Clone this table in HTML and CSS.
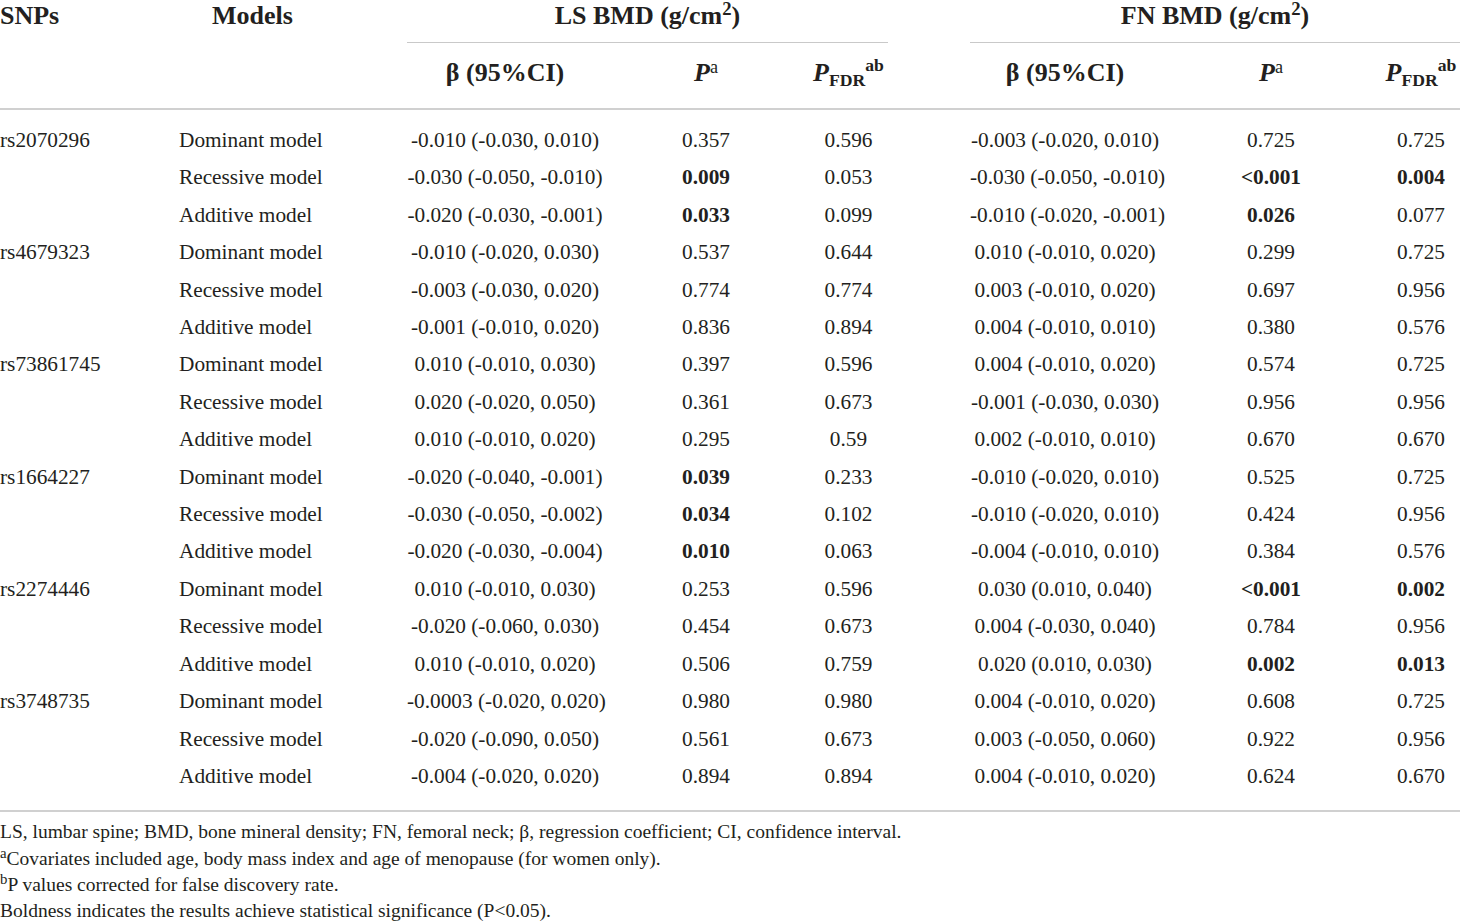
FILE: index.html
```html
<!DOCTYPE html>
<html lang="en">
<head>
  <meta charset="UTF-8">
  <title>SNPs and BMD</title>
  <link rel="stylesheet" href="styles.css">
</head>
<body>
  <table class="bmd">
    <colgroup>
      <col class="c-snp">
      <col class="c-model">
      <col class="c-beta">
      <col class="c-p">
      <col class="c-fdr">
      <col class="c-gap">
      <col class="c-beta2">
      <col class="c-p2">
      <col class="c-fdr2">
    </colgroup>
    <thead>
      <tr class="group-row">
        <th rowspan="2" class="snp-head">SNPs</th>
        <th rowspan="2" class="model-head">Models</th>
        <th colspan="3" class="group">LS BMD (g/cm<sup>2</sup>)</th>
        <th class="gap"></th>
        <th colspan="3" class="group">FN BMD (g/cm<sup>2</sup>)</th>
      </tr>
      <tr class="sub-row">
        <th>β (95%CI)</th>
        <th><i>P</i><sup class="sa">a</sup></th>
        <th><i>P</i><sub>FDR</sub><sup>ab</sup></th>
        <th class="gap"></th>
        <th>β (95%CI)</th>
        <th><i>P</i><sup class="sa">a</sup></th>
        <th><i>P</i><sub>FDR</sub><sup>ab</sup></th>
      </tr>
    </thead>
    <tbody>
      <tr class="first"><td>rs2070296</td><td>Dominant model</td><td>-0.010 (-0.030, 0.010)</td><td>0.357</td><td>0.596</td><td></td><td>-0.003 (-0.020, 0.010)</td><td>0.725</td><td>0.725</td></tr>
      <tr><td></td><td>Recessive model</td><td>-0.030 (-0.050, -0.010)</td><td><b>0.009</b></td><td>0.053</td><td></td><td>-0.030 (-0.050, -0.010)</td><td><b>&lt;0.001</b></td><td><b>0.004</b></td></tr>
      <tr><td></td><td>Additive model</td><td>-0.020 (-0.030, -0.001)</td><td><b>0.033</b></td><td>0.099</td><td></td><td>-0.010 (-0.020, -0.001)</td><td><b>0.026</b></td><td>0.077</td></tr>
      <tr><td>rs4679323</td><td>Dominant model</td><td>-0.010 (-0.020, 0.030)</td><td>0.537</td><td>0.644</td><td></td><td>0.010 (-0.010, 0.020)</td><td>0.299</td><td>0.725</td></tr>
      <tr><td></td><td>Recessive model</td><td>-0.003 (-0.030, 0.020)</td><td>0.774</td><td>0.774</td><td></td><td>0.003 (-0.010, 0.020)</td><td>0.697</td><td>0.956</td></tr>
      <tr><td></td><td>Additive model</td><td>-0.001 (-0.010, 0.020)</td><td>0.836</td><td>0.894</td><td></td><td>0.004 (-0.010, 0.010)</td><td>0.380</td><td>0.576</td></tr>
      <tr><td>rs73861745</td><td>Dominant model</td><td>0.010 (-0.010, 0.030)</td><td>0.397</td><td>0.596</td><td></td><td>0.004 (-0.010, 0.020)</td><td>0.574</td><td>0.725</td></tr>
      <tr><td></td><td>Recessive model</td><td>0.020 (-0.020, 0.050)</td><td>0.361</td><td>0.673</td><td></td><td>-0.001 (-0.030, 0.030)</td><td>0.956</td><td>0.956</td></tr>
      <tr><td></td><td>Additive model</td><td>0.010 (-0.010, 0.020)</td><td>0.295</td><td>0.59</td><td></td><td>0.002 (-0.010, 0.010)</td><td>0.670</td><td>0.670</td></tr>
      <tr><td>rs1664227</td><td>Dominant model</td><td>-0.020 (-0.040, -0.001)</td><td><b>0.039</b></td><td>0.233</td><td></td><td>-0.010 (-0.020, 0.010)</td><td>0.525</td><td>0.725</td></tr>
      <tr><td></td><td>Recessive model</td><td>-0.030 (-0.050, -0.002)</td><td><b>0.034</b></td><td>0.102</td><td></td><td>-0.010 (-0.020, 0.010)</td><td>0.424</td><td>0.956</td></tr>
      <tr><td></td><td>Additive model</td><td>-0.020 (-0.030, -0.004)</td><td><b>0.010</b></td><td>0.063</td><td></td><td>-0.004 (-0.010, 0.010)</td><td>0.384</td><td>0.576</td></tr>
      <tr><td>rs2274446</td><td>Dominant model</td><td>0.010 (-0.010, 0.030)</td><td>0.253</td><td>0.596</td><td></td><td>0.030 (0.010, 0.040)</td><td><b>&lt;0.001</b></td><td><b>0.002</b></td></tr>
      <tr><td></td><td>Recessive model</td><td>-0.020 (-0.060, 0.030)</td><td>0.454</td><td>0.673</td><td></td><td>0.004 (-0.030, 0.040)</td><td>0.784</td><td>0.956</td></tr>
      <tr><td></td><td>Additive model</td><td>0.010 (-0.010, 0.020)</td><td>0.506</td><td>0.759</td><td></td><td>0.020 (0.010, 0.030)</td><td><b>0.002</b></td><td><b>0.013</b></td></tr>
      <tr><td>rs3748735</td><td>Dominant model</td><td>-0.0003 (-0.020, 0.020)</td><td>0.980</td><td>0.980</td><td></td><td>0.004 (-0.010, 0.020)</td><td>0.608</td><td>0.725</td></tr>
      <tr><td></td><td>Recessive model</td><td>-0.020 (-0.090, 0.050)</td><td>0.561</td><td>0.673</td><td></td><td>0.003 (-0.050, 0.060)</td><td>0.922</td><td>0.956</td></tr>
      <tr class="last"><td></td><td>Additive model</td><td>-0.004 (-0.020, 0.020)</td><td>0.894</td><td>0.894</td><td></td><td>0.004 (-0.010, 0.020)</td><td>0.624</td><td>0.670</td></tr>
    </tbody>
  </table>
  <div class="notes">
    <p>LS, lumbar spine; BMD, bone mineral density; FN, femoral neck; β, regression coefficient; CI, confidence interval.</p>
    <p><sup>a</sup>Covariates included age, body mass index and age of menopause (for women only).</p>
    <p><sup>b</sup>P values corrected for false discovery rate.</p>
    <p>Boldness indicates the results achieve statistical significance (P&lt;0.05).</p>
  </div>
</body>
</html>
```

FILE: styles.css
```css
body {
  margin: 0;
  background: #fff;
  color: #231f20;
  font-family: "Liberation Serif", "Times New Roman", serif;
  width: 1460px;
}
.bmd {
  border-collapse: collapse;
  table-layout: fixed;
  width: 1460px;
}
.c-snp { width: 179px; }
.c-model { width: 228px; }
.c-beta { width: 196px; }
.c-p { width: 206px; }
.c-fdr { width: 79px; }
.c-gap { width: 82px; }
.c-beta2 { width: 190px; }
.c-p2 { width: 222px; }
.c-fdr2 { width: 78px; }

th {
  font-weight: bold;
  font-size: 26px;
  padding: 0;
  text-align: center;
  white-space: nowrap;
}
.group-row th {
  height: 42px;
  line-height: 32px;
  vertical-align: top;
}
.group-row .group {
  border-bottom: 1px solid #c9c9c9;
}
.group-row .gap {
  border-bottom: none;
}
.snp-head {
  text-align: left;
}
.model-head {
  text-align: left;
  padding-left: 33px;
}
.snp-head, .model-head {
  border-bottom: 2px solid #d0d0d0;
}
.sub-row th {
  height: 50px;
  line-height: 30px;
  padding-top: 15px;
  vertical-align: top;
  border-bottom: 2px solid #d0d0d0;
}
sup, sub {
  font-size: 0.68em;
  line-height: 0;
}
.group sup {
  font-size: 0.72em;
  vertical-align: 0.5em;
}
.sa {
  font-weight: normal;
  font-size: 0.7em;
  vertical-align: 0.45em;
}
sub {
  vertical-align: -0.3em;
}

td {
  font-size: 21.3px;
  height: 37.4px;
  line-height: 37.4px;
  padding: 0;
  text-align: center;
  white-space: nowrap;
}
td:first-child {
  text-align: left;
}
td:nth-child(2) {
  text-align: left;
}
.first td {
  padding-top: 12px;
}
.last td {
  padding-bottom: 15px;
  border-bottom: 2px solid #d0d0d0;
}

.notes {
  padding-top: 7px;
  font-size: 19.5px;
  line-height: 26.3px;
}
.notes p {
  margin: 0;
}
.notes sup {
  font-size: 0.76em;
  vertical-align: 0.45em;
}
```
